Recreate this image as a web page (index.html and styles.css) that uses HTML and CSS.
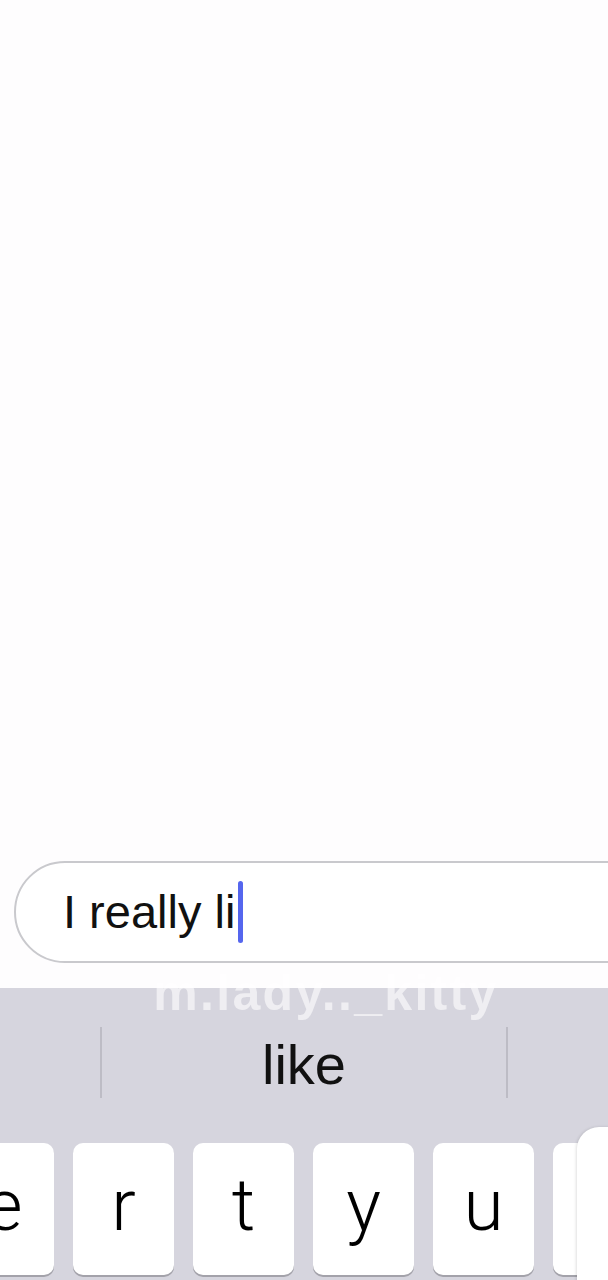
FILE: index.html
```html
<!DOCTYPE html>
<html lang="en">
<head>
    <meta charset="UTF-8">
    <meta name="viewport" content="width=device-width, initial-scale=1.0">
    <title>Message</title>
    <link rel="stylesheet" href="styles.css">
</head>
<body>
    <div class="screen">
        <div class="chat"></div>

        <div class="composer">
            <div class="field">
                <span class="typed">I really li</span><span class="caret"></span>
            </div>
        </div>

        <div class="keyboard">
            <div class="suggestions">
                <div class="cell cell-left"></div>
                <div class="cell cell-mid">like</div>
                <div class="cell cell-right"></div>
            </div>
            <div class="key-row">
                <div class="key">e</div>
                <div class="key">r</div>
                <div class="key">t</div>
                <div class="key">y</div>
                <div class="key">u</div>
                <div class="key"></div>
            </div>
            <div class="key-popup"></div>
        </div>

        <div class="watermark">m.lady.._kitty</div>
    </div>
</body>
</html>
```

FILE: styles.css
```css
body {
    margin: 0;
    background-color: #fefdfe;
    font-family: 'Liberation Sans', Arial, sans-serif;
    overflow: hidden;
}
.screen {
    position: relative;
    display: flex;
    flex-direction: column;
    height: 1280px;
    width: 608px;
    overflow: hidden;
}
.chat {
    flex: 1;
}
.composer {
    padding: 0 0 25px 14px;
}
.field {
    display: flex;
    align-items: center;
    height: 98px;
    width: 680px;
    border: 2px solid #c9c9cd;
    border-radius: 51px;
    background: #ffffff;
    padding-left: 47px;
    box-sizing: content-box;
}
.typed {
    font-size: 47px;
    color: #111111;
    line-height: 62px;
}
.caret {
    display: inline-block;
    width: 5px;
    height: 62px;
    margin-left: 3px;
    border-radius: 3px;
    background-color: #5566ee;
}
.keyboard {
    position: relative;
    height: 292px;
    background-color: #d6d5de;
}
.suggestions {
    display: flex;
    height: 71px;
    padding-top: 39px;
}
.cell {
    height: 71px;
}
.cell-left {
    width: 100px;
}
.cell-mid {
    width: 408px;
    border-left: 2px solid #bdbcc5;
    border-right: 2px solid #bdbcc5;
    text-align: center;
    font-size: 56px;
    line-height: 71px;
    padding-top: 2px;
    box-sizing: border-box;
    color: #111111;
}
.cell-right {
    flex: 1;
}
.key-row {
    display: flex;
    gap: 19px;
    margin-top: 45px;
    margin-left: -47px;
}
.key {
    flex: none;
    display: flex;
    justify-content: center;
    align-items: center;
    width: 101px;
    height: 132px;
    padding-bottom: 8px;
    box-sizing: border-box;
    background: #ffffff;
    border-radius: 10px;
    box-shadow: 0 2px 0 #a3a2aa;
    font-family: Roboto, 'Liberation Sans', sans-serif;
    font-weight: 300;
    font-size: 73px;
    color: #000000;
}
.key-popup {
    position: absolute;
    left: 577px;
    top: 139px;
    width: 120px;
    height: 200px;
    background: #ffffff;
    border-radius: 22px;
    box-shadow: -1px 0 3px rgba(0, 0, 0, 0.12);
}
.watermark {
    position: absolute;
    left: 0;
    right: 0;
    top: 968px;
    padding-left: 44px;
    text-align: center;
    font-weight: bold;
    font-size: 50px;
    line-height: 50px;
    letter-spacing: 2.3px;
    color: rgba(255, 255, 255, 0.6);
}
```
